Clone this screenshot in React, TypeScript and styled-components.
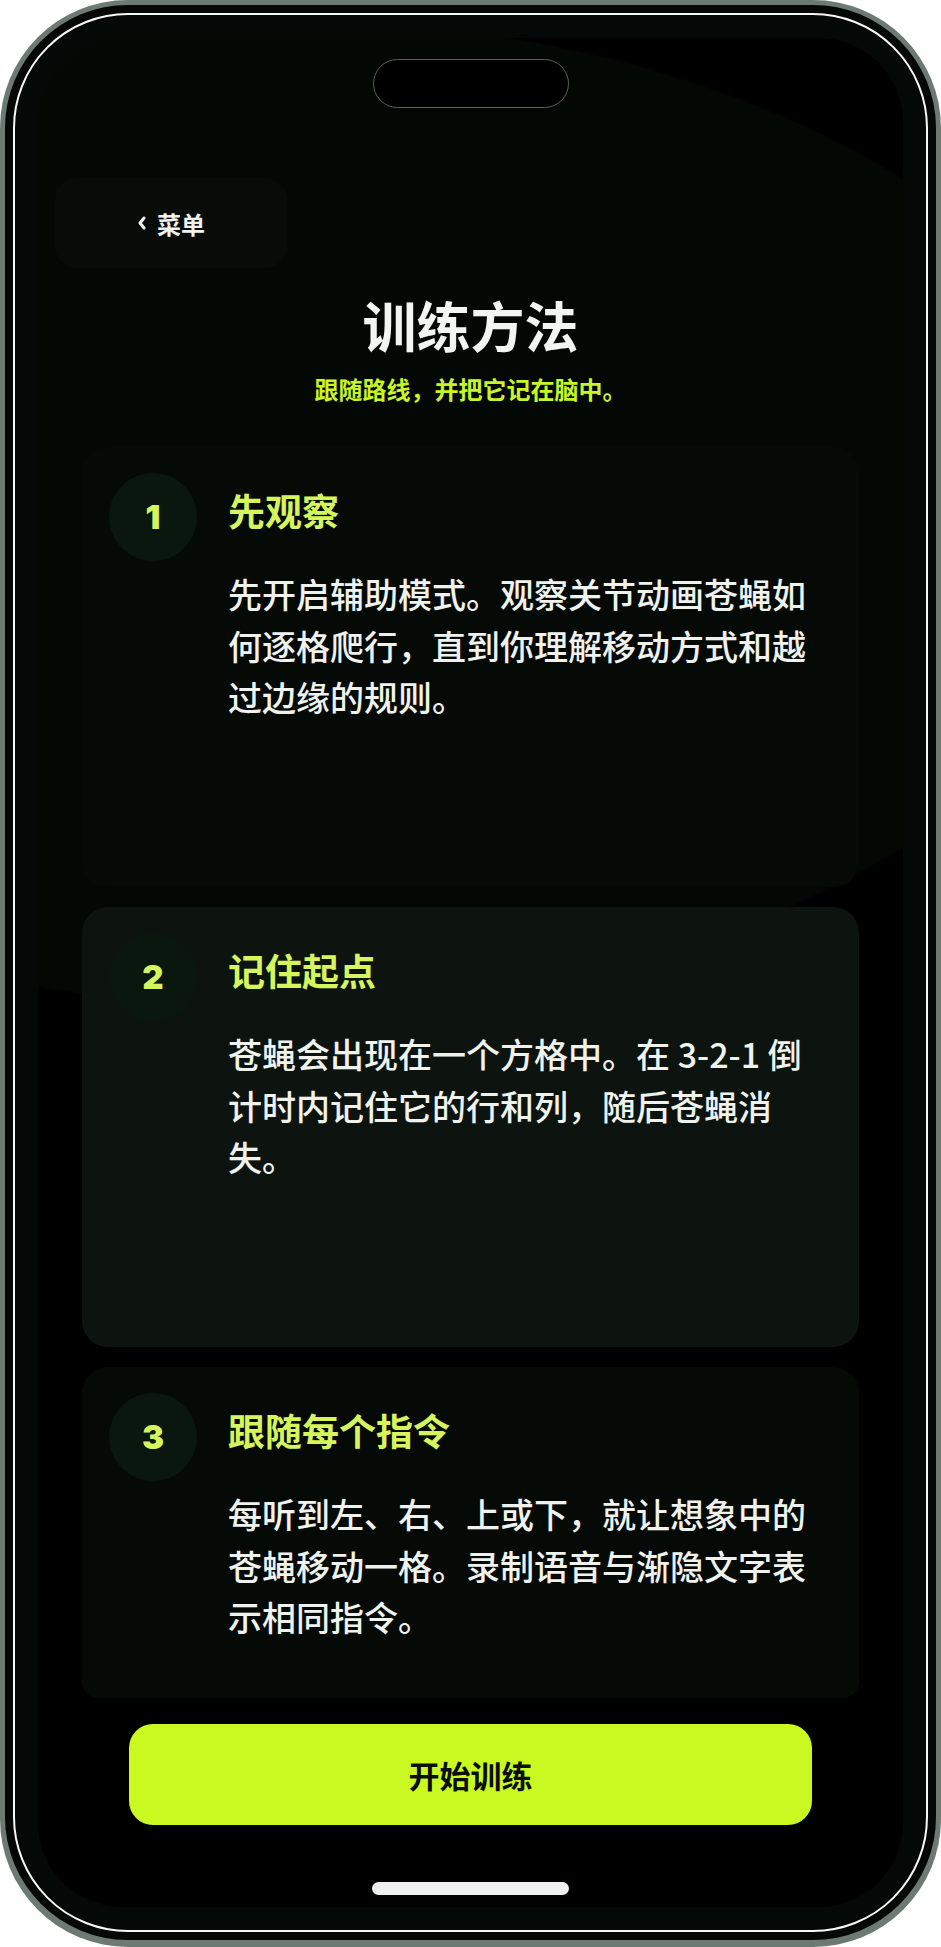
import React from "react";
import styled, { createGlobalStyle } from "styled-components";

type Step = {
    num: number;
    title: string;
    body: string;
    active?: boolean;
};

const steps: Step[] = [
    {
        num: 1,
        title: "先观察",
        body: "先开启辅助模式。观察关节动画苍蝇如何逐格爬行，直到你理解移动方式和越过边缘的规则。",
    },
    {
        num: 2,
        title: "记住起点",
        body: "苍蝇会出现在一个方格中。在 3-2-1 倒计时内记住它的行和列，随后苍蝇消失。",
        active: true,
    },
    {
        num: 3,
        title: "跟随每个指令",
        body: "每听到左、右、上或下，就让想象中的苍蝇移动一格。录制语音与渐隐文字表示相同指令。",
    },
];

const GlobalStyle = createGlobalStyle`
    html, body {
        margin: 0;
        padding: 0;
        background: #ffffff;
    }
    * {
        box-sizing: border-box;
    }
`;

const App: React.FC = () => {
    return (
        <>
            <GlobalStyle />
            <Frame>
                <Shell>
                    <Rim>
                        <Screen>
                            <Island />
                            <BackButton>
                                <svg width="10" height="14" viewBox="0 0 10 14">
                                    <polyline points="7,2 3,7 7,12" fill="none" stroke="#f1f3ef" strokeWidth="3" strokeLinecap="round" strokeLinejoin="round" />
                                </svg>
                                <span>菜单</span>
                            </BackButton>
                            <Title>训练方法</Title>
                            <Subtitle>跟随路线，并把它记在脑中。</Subtitle>
                            <CardList>
                                {steps.map((s) => (
                                    <Card key={s.num} active={s.active}>
                                        <NumberBadge>{s.num}</NumberBadge>
                                        <CardText>
                                            <CardTitle>{s.title}</CardTitle>
                                            <CardBody>{s.body}</CardBody>
                                        </CardText>
                                    </Card>
                                ))}
                            </CardList>
                            <StartButton>开始训练</StartButton>
                            <HomeIndicator />
                        </Screen>
                    </Rim>
                </Shell>
            </Frame>
        </>
    );
};

const Frame = styled.div`
    width: 941px;
    height: 1947px;
    padding: 5px 5px 7px 5px;
    border-radius: 128px;
    background: #6d7a74;
`;

const Shell = styled.div`
    width: 100%;
    height: 100%;
    padding: 8px;
    border-radius: 123px;
    background: #050806;
`;

const Rim = styled.div`
    width: 100%;
    height: 100%;
    padding: 23px;
    border: 2px solid #f7f8f7;
    border-radius: 115px;
    background: #040806;
`;

const Screen = styled.div`
    position: relative;
    display: flex;
    flex-direction: column;
    width: 865px;
    height: 1869px;
    padding-top: 140px;
    border-radius: 84px;
    overflow: hidden;
    background: radial-gradient(ellipse 853px 495px at 238px 475px, #030805 0, #030805 99.5%, #000000 100%);
    font-family: "Noto Sans CJK SC", "Noto Sans", sans-serif;
`;

const Island = styled.div`
    position: absolute;
    top: 21px;
    left: 50%;
    width: 196px;
    height: 49px;
    transform: translateX(-50%);
    border: 1.5px solid #5a605d;
    border-radius: 25px;
    background: #000000;
`;

const BackButton = styled.div`
    display: flex;
    align-items: center;
    justify-content: center;
    gap: 10px;
    align-self: flex-start;
    width: 232px;
    height: 90px;
    margin-left: 17px;
    border-radius: 22px;
    background: #080c09;
    color: #f1f3ef;
    font-size: 24px;
    font-weight: 600;
`;

const Title = styled.h1`
    margin: 25px 0 0;
    text-align: center;
    color: #f2f5f0;
    font-size: 54px;
    font-weight: 700;
    line-height: 64px;
`;

const Subtitle = styled.div`
    margin-top: 15px;
    text-align: center;
    color: #c8f526;
    font-size: 24px;
    font-weight: 600;
    line-height: 34px;
`;

const CardList = styled.div`
    display: flex;
    flex-direction: column;
    flex: 1;
    min-height: 0;
    gap: 20px;
    margin: 41px 44px 0;
    overflow: hidden;
    border-radius: 0 0 16px 16px;
`;

const Card = styled.div<{ active?: boolean }>`
    display: grid;
    grid-template-columns: 88px 590px;
    column-gap: 31px;
    align-items: start;
    flex: none;
    height: 440px;
    padding: 26px 41px 26px 27px;
    border-radius: 26px;
    background: ${(props) => (props.active ? "#0d140f" : "#060a07")};
`;

const NumberBadge = styled.div`
    display: flex;
    align-items: center;
    justify-content: center;
    width: 88px;
    height: 88px;
    border-radius: 50%;
    background: #09170e;
    color: #d6f55c;
    font-family: Inter, "Noto Sans", sans-serif;
    font-size: 33px;
    font-weight: 900;
`;

const CardText = styled.div`
    display: flex;
    flex-direction: column;
    padding-top: 12px;
`;

const CardTitle = styled.div`
    color: #d6f55c;
    font-size: 37px;
    font-weight: 700;
    line-height: 50px;
`;

const CardBody = styled.p`
    margin: 33px 0 0;
    color: #f0f2ee;
    font-size: 34px;
    font-weight: 500;
    line-height: 51.5px;
`;

const StartButton = styled.div`
    display: flex;
    align-items: center;
    justify-content: center;
    flex: none;
    height: 101px;
    margin: 26px 91px 0;
    border-radius: 24px;
    background: #caf922;
    color: #0b0e05;
    font-size: 31px;
    font-weight: 700;
`;

const HomeIndicator = styled.div`
    flex: none;
    width: 197px;
    height: 13px;
    margin: 57px auto 12px;
    border-radius: 7px;
    background: #eef1ef;
`;

export default App;
